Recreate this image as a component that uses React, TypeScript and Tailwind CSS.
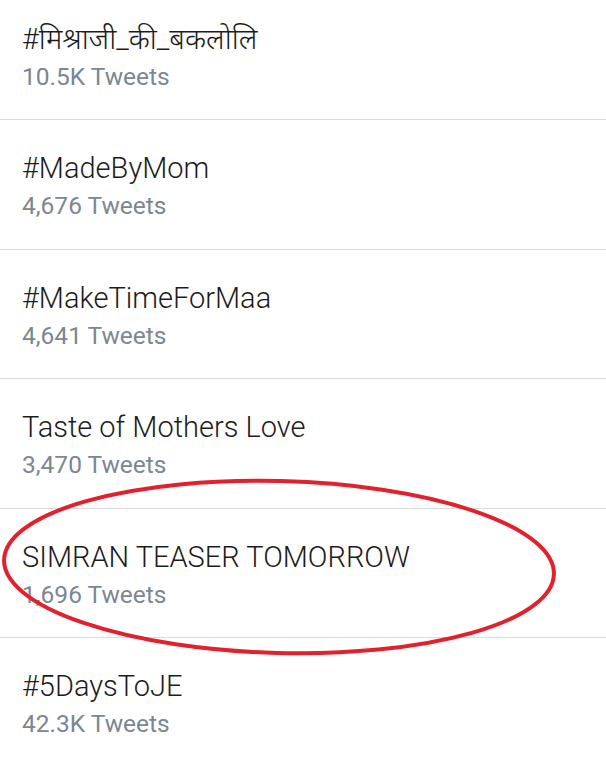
const trends = [
  { name: '#मिश्राजी_की_बकलोलि', count: '10.5K Tweets' },
  { name: '#MadeByMom', count: '4,676 Tweets' },
  { name: '#MakeTimeForMaa', count: '4,641 Tweets' },
  { name: 'Taste of Mothers Love', count: '3,470 Tweets' },
  { name: 'SIMRAN TEASER TOMORROW', count: '1,696 Tweets' },
  { name: '#5DaysToJE', count: '42.3K Tweets' },
]

export default function App() {
  return (
    <div
      className="relative w-[606px] h-[758px] overflow-hidden bg-white"
      style={{ fontFamily: 'Roboto, "Liberation Sans", "Noto Sans", "Noto Sans Devanagari", sans-serif' }}
    >
      <ul className="-mt-[9.5px]">
        {trends.map((t, i) => (
          <li key={i} className="h-[129.5px] border-b border-[#dadada] pl-[22px] pt-[31px]">
            <div className="text-[29px] leading-[34px] font-light text-[#1c1c1c]">{t.name}</div>
            <div className="mt-[6px] text-[24.5px] leading-[30px] text-[#7b8792]">{t.count}</div>
          </li>
        ))}
      </ul>

      {/* red marker circle */}
      <svg className="absolute left-0 top-0 pointer-events-none" width="606" height="758">
        <ellipse
          cx="279"
          cy="567"
          rx="275"
          ry="86"
          fill="none"
          stroke="#e1212b"
          strokeWidth="4"
          transform="rotate(1.5 279 567)"
        />
      </svg>
    </div>
  )
}
